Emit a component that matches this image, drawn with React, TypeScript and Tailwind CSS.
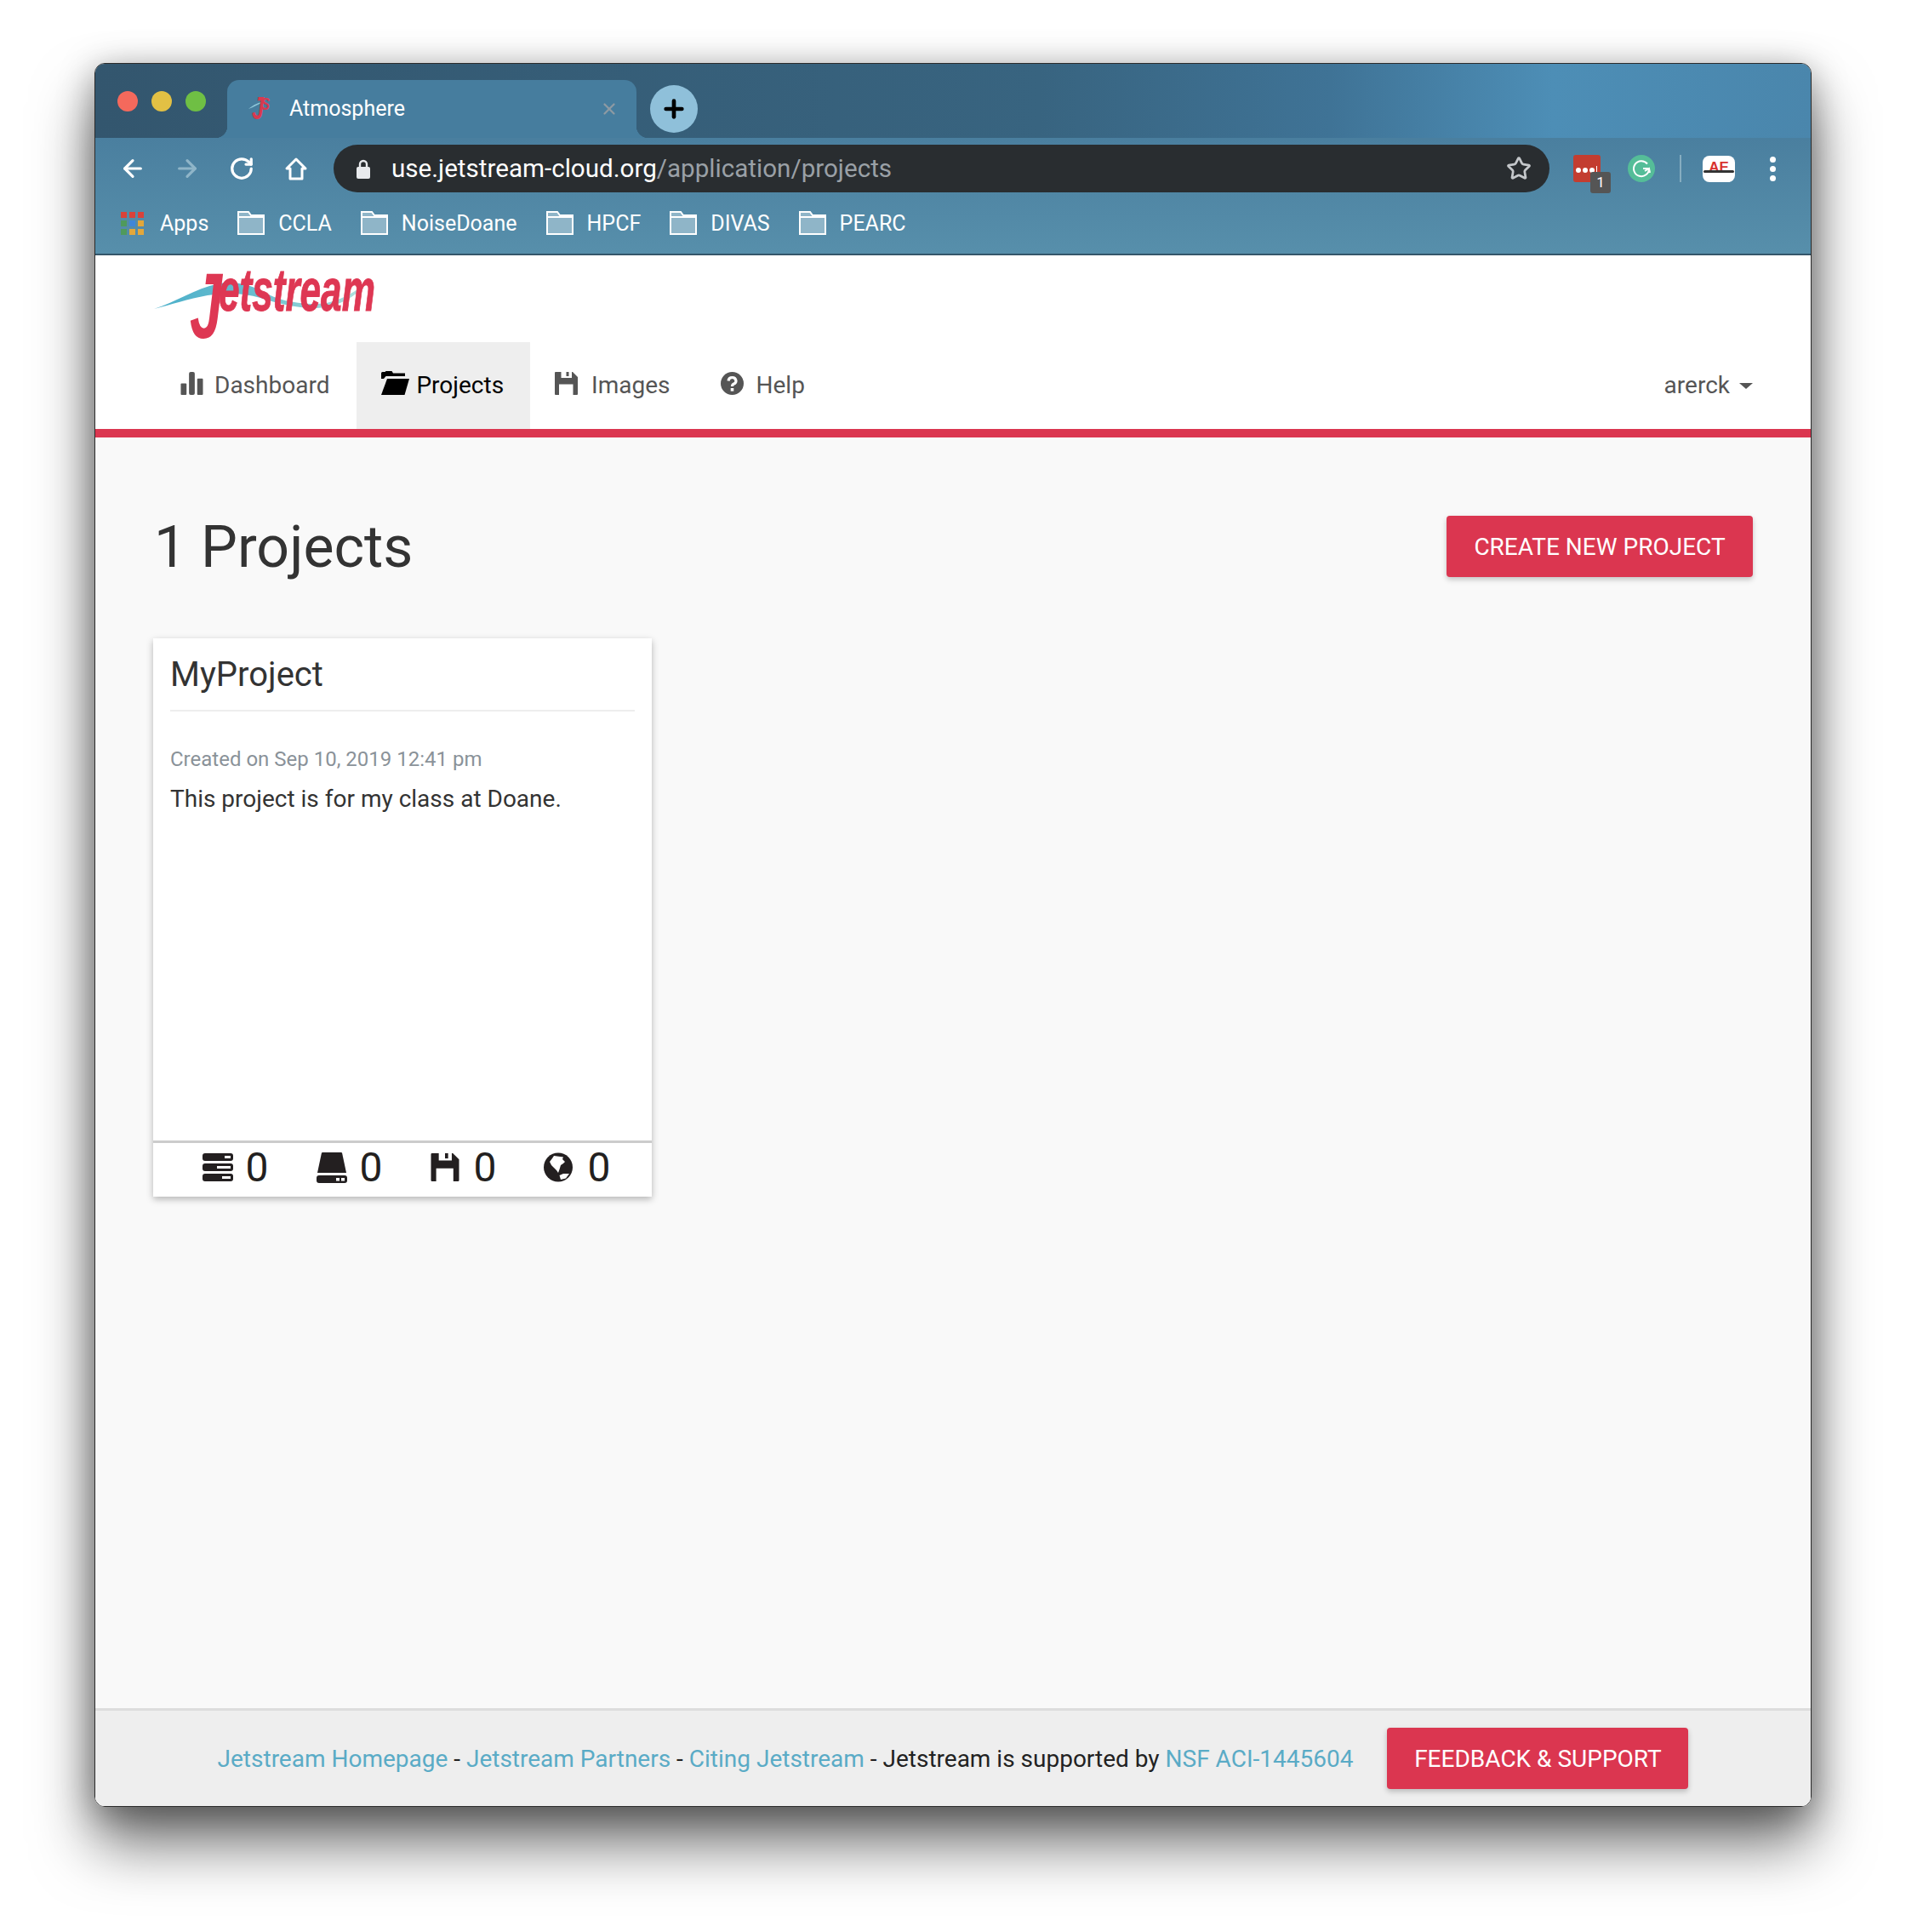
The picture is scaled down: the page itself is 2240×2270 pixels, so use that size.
import React from "react";
import { ArrowLeft, ArrowRight, RotateCw, Star, X, Plus } from "lucide-react";

const FolderIcon = () => (
  <svg width="32" height="28" viewBox="0 0 32 28" className="shrink-0">
    <path d="M1 27V1h12l3 4h15v22z" fill="#8fb5c8" stroke="#fff" strokeWidth="2" />
    <path d="M1 7h30" stroke="#fff" strokeWidth="2" />
  </svg>
);

const Bookmark = ({ label }: { label: string }) => (
  <div className="flex items-center gap-[16px]">
    <FolderIcon />
    <span>{label}</span>
  </div>
);

const AppsIcon = () => {
  const colors = ["#d9423a", "#d9423a", "#d9423a", "#4f9a5c", "#3f86d8", "#e3a73a", "#4f9a5c", "#e3a73a", "#e3a73a"];
  return (
    <div className="grid grid-cols-3 gap-[3px] w-[27px] h-[27px]">
      {colors.map((c, i) => (
        <div key={i} style={{ backgroundColor: c }} />
      ))}
    </div>
  );
};

const StatsIcon = () => (
  <svg width="27" height="27" viewBox="0 0 27 28" fill="currentColor" className="shrink-0">
    <rect x="0" y="14" width="7" height="14" rx="1" />
    <rect x="10" y="0" width="7" height="28" rx="2" />
    <rect x="20" y="8" width="7" height="20" rx="1" />
  </svg>
);

const FolderOpenIcon = () => (
  <svg width="33" height="28" viewBox="0 0 33 28" fill="currentColor" className="shrink-0">
    <path d="M0 9V2.500Q0 1 1.500 1h3l1-1h7l1.500 2.500H28v3.500H5.500L3 9z" />
    <path d="M7 9h26l-5.500 19H0z" />
  </svg>
);

const FloppyIcon = ({ w, h }: { w: number; h: number }) => (
  <svg width={w} height={h} viewBox="0 0 27 27" className="shrink-0" fill="currentColor">
    <path d="M0 1Q0 0 1 0h6.500v7H20V0h1l6 6v20q0 1-1 1h-4.500V14.500H5V27H1q-1 0-1-1z" />
    <path d="M13.500 0h3v5h-3z" />
  </svg>
);

const HelpIcon = () => (
  <svg width="27" height="27" viewBox="0 0 27 27" className="shrink-0">
    <circle cx="13.500" cy="13.500" r="13.500" fill="currentColor" />
    <path d="M9 10.500Q9.500 6.500 13.500 6.500t4.500 4q0 2.500-2.500 3.500-2 .8-2 3" fill="none" stroke="#fff" strokeWidth="3.200" />
    <rect x="11.700" y="19" width="3.600" height="3.600" fill="#fff" />
  </svg>
);

const ServerIcon = () => (
  <svg width="36" height="33" viewBox="0 0 36 33" className="shrink-0">
    <rect x="0" y="0" width="36" height="9" rx="3" fill="#231f20" />
    <rect x="0" y="12" width="36" height="9" rx="3" fill="#231f20" />
    <rect x="0" y="24" width="36" height="9" rx="3" fill="#231f20" />
    <rect x="26" y="3" width="7" height="3" fill="#fff" />
    <rect x="17" y="15" width="16" height="3" fill="#fff" />
    <rect x="23" y="27" width="10" height="3" fill="#fff" />
  </svg>
);

const DriveIcon = () => (
  <svg width="36" height="36" viewBox="0 0 36 36" className="shrink-0">
    <path d="M7 0h22l1 .5L35 24H1L6 .5z" fill="#231f20" />
    <rect x="0" y="27" width="36" height="9" rx="3" fill="#231f20" />
    <rect x="23" y="30" width="4" height="3.500" fill="#fff" />
    <rect x="29" y="30" width="4" height="3.500" fill="#fff" />
  </svg>
);

const GlobeIcon = () => (
  <svg width="34" height="35" viewBox="0 0 34 35" className="shrink-0">
    <circle cx="17" cy="17.500" r="17" fill="#231f20" />
    <path d="M12 4L23 5.500L22 8L25 11L23 13L20 15L18.500 20L17 24L15 21L12 18L9 15L7 11L10 7Z" fill="#fff" />
    <path d="M18.500 27L23 25L30 25L26 30.500L20 32Z" fill="#fff" />
  </svg>
);

const LockIcon = () => (
  <svg width="16" height="23" viewBox="0 0 16 23" className="shrink-0">
    <path d="M4 10V6a4 4 0 0 1 8 0v4" fill="none" stroke="#e8eaed" strokeWidth="2.400" />
    <rect x="0" y="9" width="16" height="14" rx="2" fill="#e8eaed" />
  </svg>
);

const CardStat = ({ icon }: { icon: React.ReactNode }) => (
  <div className="flex items-center gap-[14px]">
    <div className="flex justify-start w-[37px]">{icon}</div>
    <span className="text-[48px] leading-none text-[#231f20]">0</span>
  </div>
);

const NavItem = ({
  icon,
  label,
  spacing,
  active,
}: {
  icon: React.ReactNode;
  label: string;
  spacing: string;
  active?: boolean;
}) => (
  <div
    className={
      "flex items-center h-full " +
      spacing +
      (active ? " bg-[#eeeeee] text-black" : " text-[#555555]")
    }
  >
    <div className="flex mb-[6px]">{icon}</div>
    <span>{label}</span>
  </div>
);

const RedButton = ({ label, width }: { label: string; width: string }) => (
  <button
    className={
      "h-[72px] shrink-0 pt-[2px] rounded-[4px] bg-[#db3650] text-white text-[28px] font-normal shadow-[0_3px_6px_rgba(0,0,0,0.22)] " +
      width
    }
  >
    {label}
  </button>
);

const Logo = () => (
  <div className="relative w-[260px] h-[78px] ml-[69px] mt-[18px]">
    <svg width="260" height="78" viewBox="0 0 260 78" className="absolute left-0 top-0">
      <defs>
        <linearGradient id="swoosh" x1="0" x2="1" y1="0" y2="0">
          <stop offset="0" stopColor="#4aafca" />
          <stop offset="0.5" stopColor="#6dbfcf" />
          <stop offset="1" stopColor="#b5e2de" />
        </linearGradient>
      </defs>
      <path
        d="M0 45C25 37 50 20 77 15C95 12 110 16 125 23C140 32 160 39 190 39C215 39 235 25 250 15C238 30 215 44 190 44C165 44 145 38 125 32C105 26 85 26 63 29C40 33 20 40 0 45Z"
        fill="url(#swoosh)"
      />
    </svg>
    <span className="absolute left-[42px] top-[-24px] origin-left scale-x-[0.62] text-[110px] leading-[130px] font-bold italic text-[#de3753] font-['Liberation_Sans',sans-serif]">
      J
    </span>
    <span className="absolute left-[76px] top-[-17px] origin-left scale-x-[0.63] text-[70px] leading-[80px] font-bold italic text-[#de3753] [-webkit-text-stroke:1px_#de3753] font-['Liberation_Sans',sans-serif]">
      etstream
    </span>
  </div>
);

const TabFavicon = () => (
  <div className="relative w-[48px] h-[32px] shrink-0">
    <svg width="28" height="32" viewBox="0 0 28 32" className="absolute left-0 top-0">
      <path d="M0 16C6 11 12 8 18 8C12 10 6 14 0 16Z" fill="#8fc7da" />
    </svg>
    <span className="absolute left-[4px] top-[-4px] origin-left scale-x-[0.7] text-[36px] leading-[40px] italic font-bold text-[#d8394f] font-['Liberation_Sans',sans-serif]">
      J
    </span>
    <span className="absolute left-[15px] top-[-2px] origin-left scale-x-[0.75] text-[20px] leading-[24px] italic font-bold text-[#d8394f] font-['Liberation_Sans',sans-serif]">
      S
    </span>
  </div>
);

export default function App() {
  return (
    <div className="w-[2240px] h-[2270px] overflow-hidden bg-white pl-[111px] pt-[74px] font-['Roboto',sans-serif]">
      <div className="flex flex-col w-[2018px] h-[2049px] rounded-[12px] overflow-hidden border-[1.5px] border-[#2b2b2b] shadow-[0_44px_70px_rgba(0,0,0,0.55),0_8px_40px_rgba(0,0,0,0.35)]">
        {/* tab strip */}
        <div className="flex items-end h-[87px] shrink-0 bg-[linear-gradient(90deg,#33566e_0%,#386480_55%,#3f7396_72%,#4d8eb6_85%,#4a86ac_100%)]">
          <div className="flex items-center gap-[16px] w-[155px] h-full pl-[26px]">
            <div className="w-[24px] h-[24px] rounded-full bg-[#f4695c]" />
            <div className="w-[24px] h-[24px] rounded-full bg-[#e2c044]" />
            <div className="w-[24px] h-[24px] rounded-full bg-[#6fbf44]" />
          </div>
          <div className="relative flex items-center w-[481px] h-[68px] rounded-t-[14px] bg-[#467d9e] pl-[25px] pr-[21px] text-white text-[25px]">
            <div className="absolute left-[-14px] bottom-0 w-[14px] h-[14px] bg-[radial-gradient(circle_at_0_0,transparent_14px,#467d9e_14.500px)]" />
            <div className="absolute right-[-14px] bottom-0 w-[14px] h-[14px] bg-[radial-gradient(circle_at_100%_0,transparent_14px,#467d9e_14.500px)]" />
            <TabFavicon />
            <span>Atmosphere</span>
            <X className="ml-auto text-[#8d9aa3]" size={22} strokeWidth={2.5} />
          </div>
          <div className="flex items-center justify-center w-[56px] h-[56px] ml-[16px] mb-[6px] rounded-full bg-[#8fc0da]">
            <Plus size={32} strokeWidth={3.5} className="text-black" />
          </div>
        </div>

        {/* toolbar */}
        <div className="flex flex-col h-[138px] shrink-0 border-b-2 border-[#34566a] bg-[linear-gradient(180deg,#4a7f9f,#578fab)] text-white">
          <div className="flex items-center h-[72px] pl-[28px] pr-[41px]">
            <ArrowLeft size={32} strokeWidth={2.4} />
            <ArrowRight size={32} strokeWidth={2.4} className="ml-[32px] text-[#8fb5c8]" />
            <RotateCw size={30} strokeWidth={2.6} className="ml-[33px]" />
            <svg width="28" height="28" viewBox="0 0 28 28" className="ml-[35px]" fill="none" stroke="#fff" strokeWidth="3">
              <path d="M14 3L3 14h4v12h14V14h4z" strokeLinejoin="round" />
            </svg>
            <div className="flex items-center flex-1 h-[56px] ml-[30px] pl-[27px] pr-[21px] rounded-full bg-[#292d30]">
              <LockIcon />
              <span className="ml-[25px] pt-[2px] text-[29.600px] leading-none">
                use.jetstream-cloud.org<span className="text-[#9aa0a6]">/application/projects</span>
              </span>
              <Star size={30} strokeWidth={2.2} className="ml-auto text-[#c4c7ca]" />
            </div>
            <div className="relative w-[32px] h-[32px] ml-[28px] rounded-[3px] bg-[#c33d30]">
              <div className="flex items-center gap-[2px] pl-[3px] pt-[13px]">
                <div className="w-[6px] h-[6px] rounded-full bg-white" />
                <div className="w-[6px] h-[6px] rounded-full bg-white" />
                <div className="w-[6px] h-[6px] rounded-full bg-white" />
                <div className="w-[1px] h-[9px] bg-white" />
              </div>
              <div className="absolute left-[20px] top-[20px] flex items-center justify-center w-[24px] h-[25px] rounded-[3px] bg-[#555555] text-[17px] text-white">
                1
              </div>
            </div>
            <div className="flex items-center justify-center w-[32px] h-[32px] ml-[32px] rounded-full bg-[#55bd98]">
              <svg width="22" height="22" viewBox="0 0 22 22" fill="none" stroke="#fff" strokeWidth="2">
                <path d="M18 5.500A9 9 0 1 0 20 11h-7" />
                <path d="M15 14l5-3 1 5" />
              </svg>
            </div>
            <div className="w-[2px] h-[32px] ml-[29px] bg-[#86adc0]" />
            <div className="relative flex items-center justify-center w-[38px] h-[31px] ml-[25px] rounded-[8px] bg-white">
              <span className="mb-[3px] text-[17px] leading-none font-black text-[#d8322e] font-['Liberation_Sans',sans-serif]">AE</span>
              <div className="absolute left-[1px] top-[17px] w-[36px] h-[3px] rounded-full bg-[#333333]" />
            </div>
            <div className="flex flex-col items-center gap-[4px] ml-[41px] w-[7px]">
              <div className="w-[7px] h-[7px] rounded-full bg-white" />
              <div className="w-[7px] h-[7px] rounded-full bg-white" />
              <div className="w-[7px] h-[7px] rounded-full bg-white" />
            </div>
          </div>
          <div className="flex items-center gap-[34px] mt-[14px] pl-[30px] text-[25px] leading-none text-white">
            <div className="flex items-center gap-[19px]">
              <AppsIcon />
              <span>Apps</span>
            </div>
            <Bookmark label="CCLA" />
            <Bookmark label="NoiseDoane" />
            <Bookmark label="HPCF" />
            <Bookmark label="DIVAS" />
            <Bookmark label="PEARC" />
          </div>
        </div>

        {/* page */}
        <div className="flex flex-col flex-1 bg-[#f9f9f9] text-[#333333]">
          <div className="h-[102px] shrink-0 bg-white">
            <Logo />
          </div>
          <div className="flex items-center h-[102px] shrink-0 bg-white pl-[71px] pr-[68px] text-[28px]">
            <NavItem icon={<StatsIcon />} label="Dashboard" spacing="gap-[13px] pl-[29px] pr-[32px]" />
            <NavItem icon={<FolderOpenIcon />} label="Projects" spacing="gap-[8px] pl-[29px] pr-[31px]" active />
            <NavItem icon={<FloppyIcon w={27} h={27} />} label="Images" spacing="gap-[16px] pl-[29px] pr-[30px]" />
            <NavItem icon={<HelpIcon />} label="Help" spacing="gap-[15px] px-[29px]" />
            <div className="flex items-center gap-[11px] ml-auto text-[#555555]">
              <span>arerck</span>
              <div className="w-0 h-0 border-x-[8px] border-x-transparent border-t-[7px] border-t-[#555555]" />
            </div>
          </div>
          <div className="h-[10px] shrink-0 bg-[#db3650]" />

          <div className="flex flex-col flex-1 px-[68px] pt-[92px]">
            <div className="flex items-center justify-between h-[72px] pl-[1px]">
              <h1 className="text-[68px] leading-none mt-[2px]">1 Projects</h1>
              <RedButton label="CREATE NEW PROJECT" width="w-[360px]" />
            </div>
            <div className="flex flex-col w-[586px] h-[656px] mt-[72px] bg-white shadow-[0_3px_8px_rgba(0,0,0,0.28)]">
              <div className="flex flex-col flex-1 px-[20px]">
                <div className="flex items-center h-[86px] pt-[2px] border-b-2 border-[#eeeeee] text-[40px] leading-none text-[#333333]">
                  MyProject
                </div>
                <div className="mt-[42px] text-[24px] leading-[28px] text-[#8a9299]">
                  Created on Sep 10, 2019 12:41 pm
                </div>
                <div className="mt-[16px] text-[28px] leading-[34px] text-[#333333]">
                  This project is for my class at Doane.
                </div>
              </div>
              <div className="flex items-center justify-center gap-[56px] h-[66px] shrink-0 pl-[9px] pb-[6px] border-t-[3px] border-[#cccccc]">
                <CardStat icon={<ServerIcon />} />
                <CardStat icon={<DriveIcon />} />
                <CardStat icon={<span className="text-[#231f20]"><FloppyIcon w={34} h={33} /></span>} />
                <CardStat icon={<GlobeIcon />} />
              </div>
            </div>
          </div>

          <div className="flex items-center justify-center gap-[40px] h-[115px] shrink-0 border-t-[3px] border-[#dddddd] bg-[#eeeeee] text-[28px] text-[#222222]">
            <div className="pt-[1px]">
              <span className="text-[#5aabc6]">Jetstream Homepage</span> -{" "}
              <span className="text-[#5aabc6]">Jetstream Partners</span> -{" "}
              <span className="text-[#5aabc6]">Citing Jetstream</span> - Jetstream is supported by{" "}
              <span className="text-[#5aabc6]">NSF ACI-1445604</span>
            </div>
            <RedButton label="FEEDBACK & SUPPORT" width="w-[354px]" />
          </div>
        </div>
      </div>
    </div>
  );
}
